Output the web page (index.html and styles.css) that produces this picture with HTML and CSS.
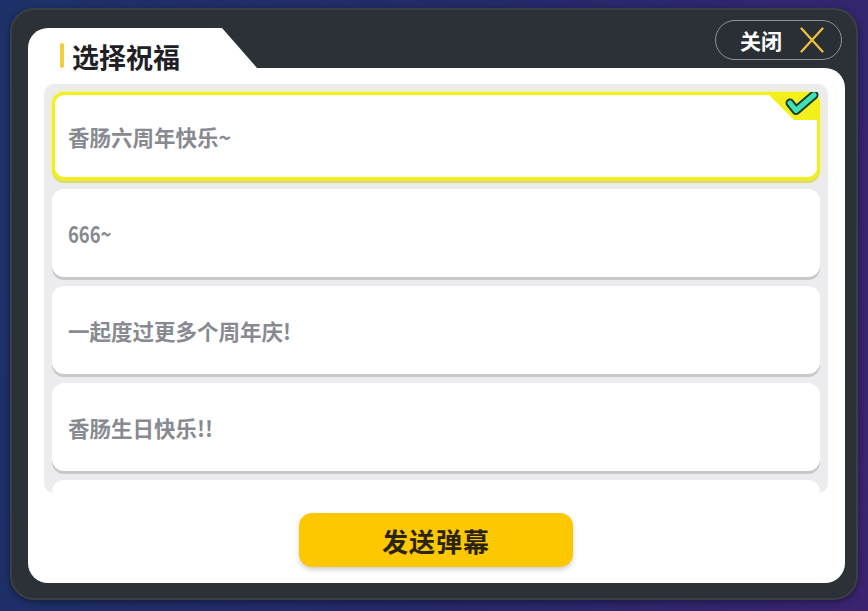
FILE: index.html
```html
<!DOCTYPE html>
<html lang="zh-CN">

<head>
  <meta charset="UTF-8" />
  <meta name="viewport" content="width=device-width, initial-scale=1.0" />
  <title>选择祝福</title>
  <link rel="stylesheet" href="styles.css">
</head>

<body>
  <div class="panel">
    <div class="panel-head">
      <div class="tab">
        <h2 class="title">选择祝福</h2>
      </div>
      <button class="close-btn">
        <span>关闭</span>
        <svg width="24" height="26" viewBox="0 0 24 26">
          <path d="M1.5 1.5 L22.5 24.5 M22.5 1.5 L1.5 24.5" stroke="#ecc53c" stroke-width="2.2" stroke-linecap="round" />
        </svg>
      </button>
    </div>

    <div class="card">
      <div class="wish-list">
        <div class="wish selected">
          <span>香肠六周年快乐~</span>
          <!-- уголок с галочкой у выбранного пункта -->
          <svg class="corner" width="54" height="28" viewBox="0 0 54 28">
            <path d="M0 0 H42 A12 12 0 0 1 54 12 V28 H28 Z" fill="#f3ef1c" />
            <polyline points="24,11 30,18.5 48,3" fill="none" stroke="#1a3a33" stroke-width="9" stroke-linejoin="round" stroke-linecap="round" />
            <polyline points="24,11 30,18.5 48,3" fill="none" stroke="#3fe0b1" stroke-width="5" stroke-linejoin="round" stroke-linecap="round" />
          </svg>
        </div>
        <div class="wish"><span class="num">666~</span></div>
        <div class="wish"><span>一起度过更多个周年庆!</span></div>
        <div class="wish"><span>香肠生日快乐!!</span></div>
        <div class="wish"><span></span></div>
      </div>
      <button class="send-btn">发送弹幕</button>
    </div>
  </div>
</body>

</html>
```

FILE: styles.css
```css
body {
  margin: 0;
  width: 868px;
  height: 611px;
  padding: 8px 10px 11px 10px;
  box-sizing: border-box;
  background: linear-gradient(100deg, #1d3168, #25296a 55%, #3a2470);
  font-family: "Noto Sans CJK SC", sans-serif;
  overflow: hidden;
}

.panel {
  height: 592px;
  box-sizing: border-box;
  padding: 20px 13px 17px 18px;
  background: #2c3037;
  border-radius: 24px;
  box-shadow: inset 0 0 0 2px #3a3e46, 0 2px 6px rgba(0, 0, 0, 0.4);
  display: flex;
  flex-direction: column;
}

.panel-head {
  height: 40px;
  display: flex;
  justify-content: space-between;
}

.tab {
  position: relative;
  width: 229px;
  height: 40px;
  padding-left: 32px;
  box-sizing: border-box;
  display: flex;
  align-items: flex-end;
}

.tab::before {
  content: "";
  position: absolute;
  inset: 0;
  background: #fff;
  border-top-left-radius: 20px;
  clip-path: polygon(0 0, 194px 0, 229px 100%, 0 100%);
  z-index: 0;
}

.title {
  position: relative;
  z-index: 1;
  margin: 0 0 -3px 0;
  padding-left: 12px;
  font-size: 27px;
  line-height: 28px;
  font-weight: 700;
  color: #1f2126;
}

.title::before {
  content: "";
  position: absolute;
  left: 0;
  top: 0;
  width: 4px;
  height: 25px;
  border-radius: 2px;
  background: #f1cf3c;
}

.close-btn {
  margin-top: -8px;
  margin-right: 3px;
  width: 127px;
  height: 40px;
  box-sizing: border-box;
  border: 1.5px solid #8f929a;
  border-radius: 20px;
  background: #2a2e35;
  color: #fff;
  font-family: "Noto Sans CJK SC", sans-serif;
  font-size: 21px;
  font-weight: 700;
  display: flex;
  align-items: center;
  gap: 18px;
  padding: 0 0 0 24px;
}

.card {
  flex: 1;
  background: #fff;
  border-radius: 0 20px 20px 20px;
  padding: 16px 17px 16px 16px;
  display: flex;
  flex-direction: column;
  align-items: center;
}

.wish-list {
  align-self: stretch;
  height: 409px;
  box-sizing: border-box;
  padding: 8px;
  background: #ececee;
  border-radius: 10px;
  overflow: hidden;
  display: flex;
  flex-direction: column;
  gap: 9px;
}

.wish {
  position: relative;
  flex: 0 0 88px;
  box-sizing: border-box;
  background: #fff;
  border-radius: 12px;
  box-shadow: 0 3px 0 #c8c8cb;
  display: flex;
  align-items: center;
  padding-left: 16px;
  font-family: "Noto Sans CJK SC", sans-serif;
  font-size: 21.5px;
  font-weight: 700;
  color: #878a90;
}

/* цифры в макете узкие */
.wish .num {
  display: inline-block;
  font-size: 23px;
  transform: scaleX(0.8);
  transform-origin: left center;
}

.wish.selected {
  border: 3px solid #f3ef1c;
  padding-left: 13px;
  box-shadow: 0 0 4px #f7f36a, 0 3px 0 #d8d66a;
}

.corner {
  position: absolute;
  top: -3px;
  right: -3px;
}

.send-btn {
  margin-top: 20px;
  width: 274px;
  height: 54px;
  border: none;
  border-radius: 13px;
  background: #fdc800;
  box-shadow: 0 3px 5px rgba(0, 0, 0, 0.18);
  color: #2b2412;
  font-family: "Noto Sans CJK SC", sans-serif;
  font-size: 26px;
  font-weight: 700;
  letter-spacing: 1px;
}
```
